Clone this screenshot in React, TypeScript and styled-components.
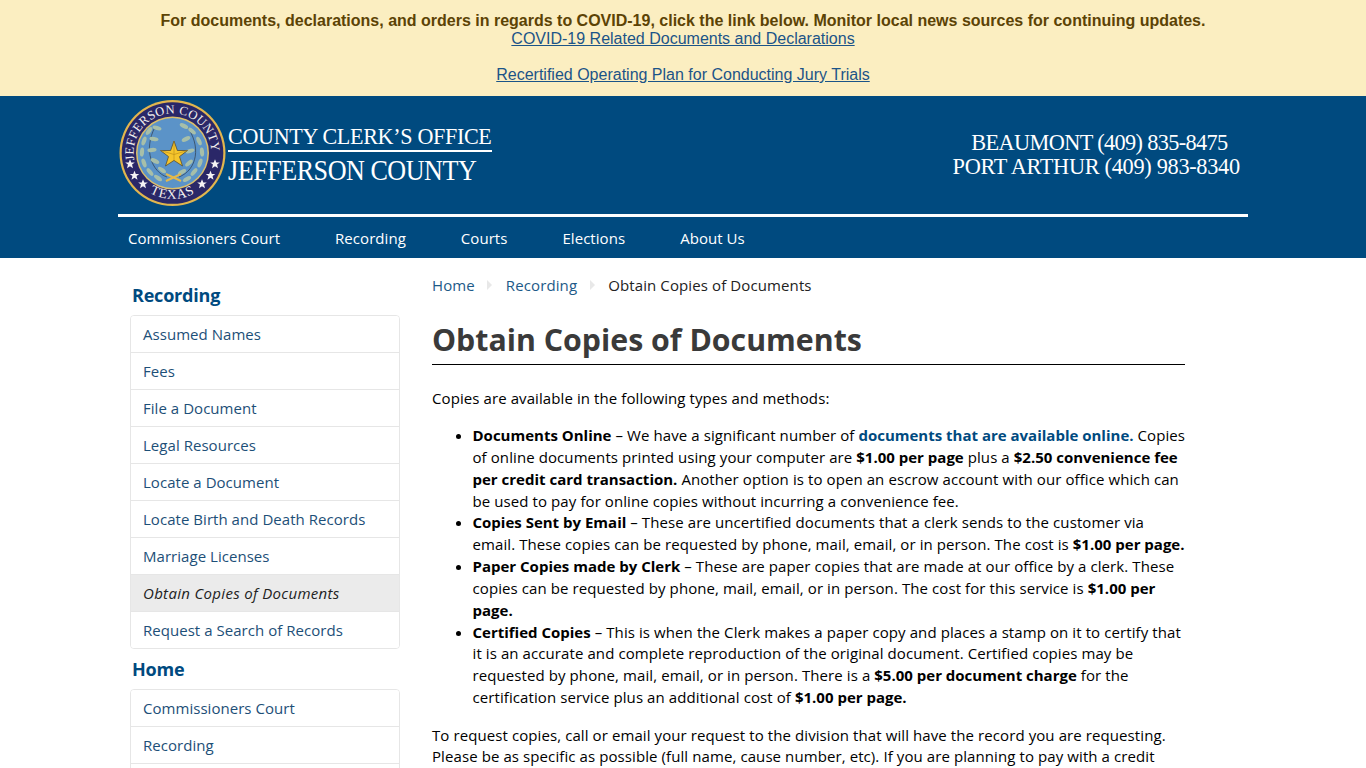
import React from "react";
import styled, { createGlobalStyle } from "styled-components";

const Global = createGlobalStyle`
  html, body { margin: 0; padding: 0; height: 768px; overflow: hidden; background: #fff; }
  body { font-family: "Open Sans", "Noto Sans", sans-serif; font-size: 15px; color: #000; }
  * { box-sizing: border-box; }
`;

const Banner = styled.div`
  height: 96px;
  background: #fbeec1;
  padding-top: 12px;
  text-align: center;
  font-family: "Liberation Sans", Arial, sans-serif;
  font-size: 16px;
  line-height: 18px;
`;
const BannerNote = styled.div`
  font-weight: 700;
  color: #5c4305;
`;
const BannerLink = styled.a<{ $gap?: boolean }>`
  display: block;
  color: #1b5488;
  text-decoration: underline;
  margin-top: ${(p) => (p.$gap ? "18px" : "0")};
`;
const Header = styled.header`
  height: 162px;
  background: #004a7f;
`;
const HeaderInner = styled.div`
  width: 1130px;
  margin: 0 auto 0 118px;
`;
const Masthead = styled.div`
  height: 121px;
  display: flex;
  align-items: flex-start;
  justify-content: space-between;
  border-bottom: 3px solid #fff;
  color: #fff;
  font-family: "Liberation Serif", "Times New Roman", serif;
`;
const Brand = styled.div`
  display: flex;
  align-items: flex-start;
  padding-top: 2px;
`;
const SealSvg = styled.svg`
  flex: none;
  display: block;
`;
const BrandText = styled.div`
  padding-top: 25px;
  width: 264px;
`;
const BrandTop = styled.div`
  height: 29px;
  border-bottom: 2px solid #fff;
  white-space: nowrap;
`;
const BrandTopText = styled.span`
  display: inline-block;
  font-size: 24px;
  line-height: 27px;
  letter-spacing: -0.35px;
  transform: scaleX(0.92);
  transform-origin: left center;
`;
const BrandBottom = styled.div`
  font-size: 30px;
  line-height: 36px;
  letter-spacing: -0.55px;
  white-space: nowrap;
  transform: scaleX(0.87);
  transform-origin: left center;
`;
const Phones = styled.div`
  margin: 34px 8px 0 0;
  font-size: 24px;
  line-height: 24px;
  text-align: center;
  white-space: nowrap;
  transform: scaleX(0.93);
  transform-origin: right center;
`;
const PhoneLine = styled.div<{ $tight?: boolean }>`
  letter-spacing: ${(p) => (p.$tight ? "-0.7px" : "-0.33px")};
  padding-left: ${(p) => (p.$tight ? "7px" : "0")};
`;
const Nav = styled.nav`
  display: flex;
  gap: 55px;
  padding-left: 10px;
  height: 41px;
  align-items: center;
`;
const NavLink = styled.a`
  color: #fff;
  font-size: 15px;
  letter-spacing: 0.05px;
  white-space: nowrap;
`;
const Page = styled.div`
  display: flex;
  align-items: flex-start;
  padding-left: 130px;
`;
const Sidebar = styled.aside`
  width: 270px;
  margin-right: 32px;
  padding-top: 24px;
`;
const SideHeading = styled.h2`
  margin: 0 0 7px 2px;
  font-size: 18px;
  line-height: 26px;
  font-weight: 700;
  color: #004a7f;
  letter-spacing: -0.2px;
`;
const SideList = styled.ul`
  list-style: none;
  margin: 0 0 7px;
  padding: 0;
  border: 1px solid #e6e6e6;
  border-radius: 4px;
  overflow: hidden;
`;
const SideItem = styled.li<{ $active?: boolean }>`
  height: 37px;
  padding-left: 12px;
  display: flex;
  align-items: center;
  font-size: 15px;
  color: ${(p) => (p.$active ? "#222" : "#1d4f78")};
  font-style: ${(p) => (p.$active ? "italic" : "normal")};
  background: ${(p) => (p.$active ? "#ebebeb" : "#fff")};
  border-top: 1px solid #e6e6e6;
  letter-spacing: ${(p) => (p.$active ? "0.32px" : "0.04px")};
  white-space: nowrap;
  &:first-child { border-top: 0; height: 36px; }
`;
const Main = styled.main`
  width: 753px;
  padding-top: 15px;
`;
const Crumbs = styled.div`
  display: flex;
  align-items: center;
  height: 23px;
  font-size: 15px;
  letter-spacing: 0.11px;
`;
const Crumb = styled.a`
  color: #1d5a88;
`;
const CrumbHere = styled.span`
  color: #222;
`;
const CrumbArrow = styled.span`
  width: 0;
  height: 0;
  margin: 0 13.5px 0 12.5px;
  border-left: 5px solid #e8e8e8;
  border-top: 5px solid transparent;
  border-bottom: 5px solid transparent;
`;
const Title = styled.h1`
  margin: 20px 0 0;
  height: 49px;
  padding-top: 5px;
  border-bottom: 1px solid #000;
  font-size: 30.3px;
  line-height: 38px;
  font-weight: 700;
  color: #3a3a3a;
  white-space: nowrap;
`;
const Para = styled.p<{ $after?: boolean }>`
  margin: ${(p) => (p.$after ? "15.7px" : "23px")} 0 0;
  font-size: 15px;
  line-height: 21.83px;
  letter-spacing: 0.09px;
  white-space: nowrap;
`;
const Bullets = styled.ul`
  margin: 15.3px 0 0;
  padding-left: 40.5px;
  font-size: 15px;
  line-height: 21.83px;
  letter-spacing: 0.09px;
  white-space: nowrap;
`;
const Bold = styled.b`
  font-weight: 700;
  letter-spacing: 0;
`;
const BoldLink = styled.a`
  font-weight: 700;
  color: #004a7f;
  letter-spacing: 0;
`;
const Line = styled.span`
  display: block;
`;

const STAR = "0,-8 2.2,-2.5 8,-2.5 3.4,1 5,7 0,3.6 -5,7 -3.4,1 -8,-2.5 -2.2,-2.5";

function Seal() {
  const stars = [[130, 164], [134.5, 175.5], [143, 184]];
  const leftLeaves = [[149, 131, -55], [144, 141, -70], [142, 152, -85], [144, 163, 70], [150, 172, 50], [158, 178, 35], [157, 128, 15], [154, 139, 10], [152, 150, -5], [155, 161, 25], [162, 170, 35]];
  const rightLeaves = [[184, 126, 25], [192, 131, 40], [199, 141, 65], [202, 152, 85], [200, 163, 110], [194, 172, 130], [187, 179, 150], [186, 139, -25], [190, 151, -15], [189, 163, -40], [182, 172, -30]];
  return (
    <SealSvg width="110" height="110" viewBox="118 98 110 110">
      <defs>
        <path id="sealTop" d="M 134.4 159.8 A 38.8 38.8 0 1 1 210.6 159.8" />
        <path id="sealBottom" d="M 142.8 188 A 46 46 0 0 0 202.2 188" />
      </defs>
      <circle cx="172.5" cy="153" r="53" fill="#e2b64e" />
      <circle cx="172.5" cy="153" r="50.8" fill="#2a2768" />
      <circle cx="172.5" cy="153" r="36.5" fill="#dcbf6a" />
      <circle cx="172.5" cy="153" r="35" fill="#5b93c8" />
      <text fontFamily="Liberation Serif, serif" fontSize="12.6" fill="#f3f0ee" letterSpacing="0.3">
        <textPath href="#sealTop">JEFFERSON COUNTY</textPath>
      </text>
      <text fontFamily="Liberation Serif, serif" fontSize="13.5" fill="#f3f0ee" letterSpacing="0.8" textAnchor="middle">
        <textPath href="#sealBottom" startOffset="50%">TEXAS</textPath>
      </text>
      {stars.map(([x, y]) => (
        <polygon key={`${x}l`} transform={`translate(${x} ${y}) scale(0.6)`} fill="#f4f2f4" points={STAR} />
      ))}
      {stars.map(([x, y]) => (
        <polygon key={`${x}r`} transform={`translate(${345 - x} ${y}) scale(0.6)`} fill="#f4f2f4" points={STAR} />
      ))}
      <g fill="none" stroke="#33465a" strokeWidth="0.8">
        <path d="M 167 177 C 152 172 143 150 155 127" />
        <path d="M 179 177 C 197 170 202 146 186 125" />
      </g>
      <g fill="#a7bfa9">
        {[...leftLeaves, ...rightLeaves].map(([x, y, r]) => (
          <ellipse key={`${x}-${y}`} cx={x} cy={y} rx="4.6" ry="2.1" transform={`rotate(${r} ${x} ${y})`} />
        ))}
      </g>
      <polygon fill="#f5c52c" stroke="#4a4026" strokeWidth="0.7"
        points="174,141 177.4,150.5 187.5,150.5 179.5,156.6 182.5,166 174,160.4 165.5,166 168.5,156.6 160.5,150.5 170.6,150.5" />
      <path d="M 174 141 L 174 160.4 M 160.5 150.5 L 174 154.5 M 187.5 150.5 L 174 154.5" stroke="#b98a17" strokeWidth="0.6" fill="none" />
      <path d="M 166 174 L 181 181 M 181 174 L 166 181" stroke="#e2b84c" strokeWidth="2" fill="none" />
    </SealSvg>
  );
}

const recording = ["Assumed Names", "Fees", "File a Document", "Legal Resources", "Locate a Document", "Locate Birth and Death Records", "Marriage Licenses", "Obtain Copies of Documents", "Request a Search of Records"];

export default function App() {
  return (
    <>
      <Global />
      <Banner>
        <BannerNote>For documents, declarations, and orders in regards to COVID-19, click the link below. Monitor local news sources for continuing updates.</BannerNote>
        <BannerLink>COVID-19 Related Documents and Declarations</BannerLink>
        <BannerLink $gap>Recertified Operating Plan for Conducting Jury Trials</BannerLink>
      </Banner>
      <Header>
        <HeaderInner>
          <Masthead>
            <Brand>
              <Seal />
              <BrandText>
                <BrandTop><BrandTopText>COUNTY CLERK’S OFFICE</BrandTopText></BrandTop>
                <BrandBottom>JEFFERSON COUNTY</BrandBottom>
              </BrandText>
            </Brand>
            <Phones>
              <PhoneLine $tight>BEAUMONT (409) 835-8475</PhoneLine>
              <PhoneLine>PORT ARTHUR (409) 983-8340</PhoneLine>
            </Phones>
          </Masthead>
          <Nav>
            <NavLink>Commissioners Court</NavLink>
            <NavLink>Recording</NavLink>
            <NavLink>Courts</NavLink>
            <NavLink>Elections</NavLink>
            <NavLink>About Us</NavLink>
          </Nav>
        </HeaderInner>
      </Header>
      <Page>
        <Sidebar>
          <SideHeading>Recording</SideHeading>
          <SideList>
            {recording.map((r) => (
              <SideItem key={r} $active={r === "Obtain Copies of Documents"}>{r}</SideItem>
            ))}
          </SideList>
          <SideHeading>Home</SideHeading>
          <SideList>
            <SideItem>Commissioners Court</SideItem>
            <SideItem>Recording</SideItem>
            <SideItem>Courts</SideItem>
          </SideList>
        </Sidebar>
        <Main>
          <Crumbs>
            <Crumb>Home</Crumb>
            <CrumbArrow />
            <Crumb>Recording</Crumb>
            <CrumbArrow />
            <CrumbHere>Obtain Copies of Documents</CrumbHere>
          </Crumbs>
          <Title>Obtain Copies of Documents</Title>
          <Para>Copies are available in the following types and methods:</Para>
          <Bullets>
            <li>
              <Line><Bold>Documents Online</Bold> – We have a significant number of <BoldLink>documents that are available online.</BoldLink> Copies</Line>
              <Line>of online documents printed using your computer are <Bold>$1.00 per page</Bold> plus a <Bold>$2.50 convenience fee</Bold></Line>
              <Line><Bold>per credit card transaction.</Bold> Another option is to open an escrow account with our office which can</Line>
              <Line>be used to pay for online copies without incurring a convenience fee.</Line>
            </li>
            <li>
              <Line><Bold>Copies Sent by Email</Bold> – These are uncertified documents that a clerk sends to the customer via</Line>
              <Line>email. These copies can be requested by phone, mail, email, or in person. The cost is <Bold>$1.00 per page.</Bold></Line>
            </li>
            <li>
              <Line><Bold>Paper Copies made by Clerk</Bold> – These are paper copies that are made at our office by a clerk. These</Line>
              <Line>copies can be requested by phone, mail, email, or in person. The cost for this service is <Bold>$1.00 per</Bold></Line>
              <Line><Bold>page.</Bold></Line>
            </li>
            <li>
              <Line><Bold>Certified Copies</Bold> – This is when the Clerk makes a paper copy and places a stamp on it to certify that</Line>
              <Line>it is an accurate and complete reproduction of the original document. Certified copies may be</Line>
              <Line>requested by phone, mail, email, or in person. There is a <Bold>$5.00 per document charge</Bold> for the</Line>
              <Line>certification service plus an additional cost of <Bold>$1.00 per page.</Bold></Line>
            </li>
          </Bullets>
          <Para $after>
            <Line>To request copies, call or email your request to the division that will have the record you are requesting.</Line>
            <Line>Please be as specific as possible (full name, cause number, etc). If you are planning to pay with a credit</Line>
          </Para>
        </Main>
      </Page>
    </>
  );
}
